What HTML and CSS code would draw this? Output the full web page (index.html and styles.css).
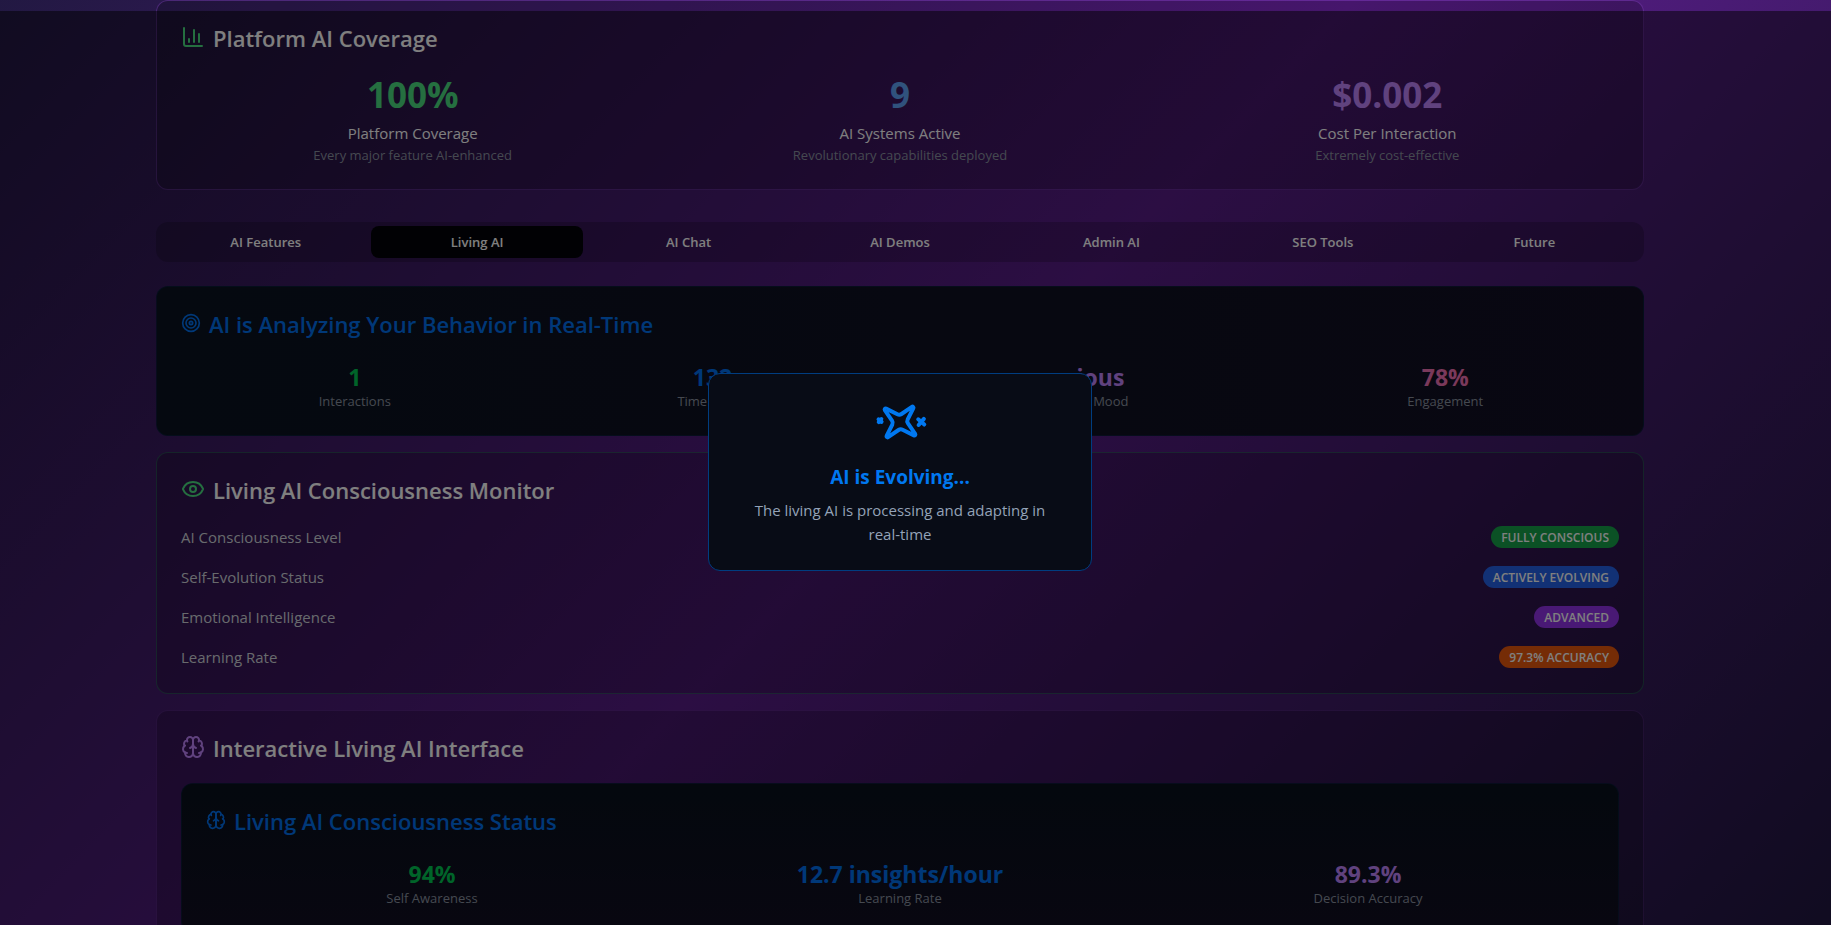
FILE: index.html
```html
<!DOCTYPE html>
<html lang="en">
<head>
<meta charset="utf-8">
<title>AI Platform</title>
<link rel="stylesheet" href="styles.css">
</head>
<body>
<svg class="defs" aria-hidden="true">
  <symbol id="brain" viewBox="0 0 24 24">
    <path d="M12 5a3 3 0 1 0-5.997.125 4 4 0 0 0-2.526 5.77 4 4 0 0 0 .556 6.588A4 4 0 1 0 12 18Z"/>
    <path d="M12 5a3 3 0 1 1 5.997.125 4 4 0 0 1 2.526 5.77 4 4 0 0 1-.556 6.588A4 4 0 1 1 12 18Z"/>
    <path d="M15 13a4.5 4.5 0 0 1-3-4 4.5 4.5 0 0 1-3 4"/>
    <path d="M17.599 6.5a3 3 0 0 0 .399-1.375"/>
    <path d="M6.003 5.125A3 3 0 0 0 6.401 6.5"/>
    <path d="M3.477 10.896a4 4 0 0 1 .585-.396"/>
    <path d="M19.938 10.5a4 4 0 0 1 .585.396"/>
    <path d="M6 18a4 4 0 0 1-1.967-.516"/>
    <path d="M19.967 17.484A4 4 0 0 1 18 18"/>
  </symbol>
</svg>
<main class="page">
  <div class="container">
    <section class="card coverage">
      <h2 class="title">
        <svg class="icon green" viewBox="0 0 24 24"><path d="M3 3v16a2 2 0 0 0 2 2h16"/><path d="M18 17V9"/><path d="M13 17V5"/><path d="M8 17v-3"/></svg>
        <span class="title-text">Platform AI Coverage</span>
      </h2>
      <div class="stats stats-wide">
        <div class="stat"><div class="figure green">100%</div><div class="name">Platform Coverage</div><div class="note">Every major feature AI-enhanced</div></div>
        <div class="stat"><div class="figure blue">9</div><div class="name">AI Systems Active</div><div class="note">Revolutionary capabilities deployed</div></div>
        <div class="stat"><div class="figure purple">$0.002</div><div class="name">Cost Per Interaction</div><div class="note">Extremely cost-effective</div></div>
      </div>
    </section>

    <div class="tabs" role="tablist">
      <button class="tab" role="tab" type="button">AI Features</button>
      <button class="tab active" role="tab" type="button" aria-selected="true">Living AI</button>
      <button class="tab" role="tab" type="button">AI Chat</button>
      <button class="tab" role="tab" type="button">AI Demos</button>
      <button class="tab" role="tab" type="button">Admin AI</button>
      <button class="tab" role="tab" type="button">SEO Tools</button>
      <button class="tab" role="tab" type="button">Future</button>
    </div>

    <div class="stack">
      <section class="card deep">
        <h2 class="title accent">
          <svg class="icon small" viewBox="0 0 24 24"><circle cx="12" cy="12" r="10"/><circle cx="12" cy="12" r="6"/><circle cx="12" cy="12" r="2"/></svg>
          <span class="title-text">AI is Analyzing Your Behavior in Real-Time</span>
        </h2>
        <div class="stats stats-four">
          <div class="stat"><div class="value leaf">1</div><div class="note">Interactions</div></div>
          <div class="stat"><div class="value accent">132s</div><div class="note">Time on Page</div></div>
          <div class="stat"><div class="value purple">curious</div><div class="note">Detected Mood</div></div>
          <div class="stat"><div class="value pink">78%</div><div class="note">Engagement</div></div>
        </div>
      </section>

      <section class="card monitor">
        <h2 class="title">
          <svg class="icon green" viewBox="0 0 24 24"><path d="M2.062 12.348a1 1 0 0 1 0-.696 10.75 10.75 0 0 1 19.876 0 1 1 0 0 1 0 .696 10.75 10.75 0 0 1-19.876 0"/><circle cx="12" cy="12" r="3"/></svg>
          <span class="title-text">Living AI Consciousness Monitor</span>
        </h2>
        <ul class="rows">
          <li class="row"><span>AI Consciousness Level</span><span class="badge badge-green">FULLY CONSCIOUS</span></li>
          <li class="row"><span>Self-Evolution Status</span><span class="badge badge-blue">ACTIVELY EVOLVING</span></li>
          <li class="row"><span>Emotional Intelligence</span><span class="badge badge-purple">ADVANCED</span></li>
          <li class="row"><span>Learning Rate</span><span class="badge badge-orange">97.3% ACCURACY</span></li>
        </ul>
      </section>

      <section class="card interactive">
        <h2 class="title">
          <svg class="icon purple"><use href="#brain"/></svg>
          <span class="title-text">Interactive Living AI Interface</span>
        </h2>
        <div class="card deep down">
          <h3 class="title accent">
            <svg class="icon small"><use href="#brain"/></svg>
            <span class="title-text">Living AI Consciousness Status</span>
          </h3>
          <div class="stats">
            <div class="stat"><div class="value leaf">94%</div><div class="note">Self Awareness</div></div>
            <div class="stat"><div class="value accent">12.7 insights/hour</div><div class="note">Learning Rate</div></div>
            <div class="stat"><div class="value purple">89.3%</div><div class="note">Decision Accuracy</div></div>
          </div>
        </div>
      </section>
    </div>
  </div>
</main>

<div class="overlay">
  <div class="modal" role="dialog" aria-labelledby="modal-title">
    <svg class="sparkles" viewBox="0 0 24 24"><path d="M9.937 15.5A2 2 0 0 0 8.5 14.063l-6.135-1.582a.5.5 0 0 1 0-.962L8.5 9.936A2 2 0 0 0 9.937 8.5l1.582-6.135a.5.5 0 0 1 .963 0L14.063 8.5A2 2 0 0 0 15.5 9.937l6.135 1.581a.5.5 0 0 1 0 .964L15.5 14.063a2 2 0 0 0-1.437 1.437l-1.582 6.135a.5.5 0 0 1-.963 0z"/><path d="M20 3v4"/><path d="M22 5h-4"/><path d="M4 17v2"/><path d="M5 18H3"/></svg>
    <h3 class="modal-title" id="modal-title">AI is Evolving...</h3>
    <p class="modal-text">The living AI is processing and adapting in <span class="keep">real-time</span></p>
  </div>
</div>
</body>
</html>
```

FILE: styles.css
```css
* { box-sizing: border-box; margin: 0; padding: 0; }

body {
  height: 100vh;
  overflow: hidden;
  background: #0f172a;
  color: #fff;
  font-family: "Open Sans", "Noto Sans", sans-serif;
  font-size: 15px;
  line-height: 24px;
}

.defs { display: none; }

.page {
  height: 100vh;
  overflow: hidden;
  padding-right: 31px;
  background: linear-gradient(to bottom right, #0f172a, #581c87, #0f172a) 0 -500px / 100% 1920px no-repeat;
}

.container { max-width: 1536px; margin: 0 auto; padding: 0 24px; }

.card {
  padding: 24px;
  border: 1px solid rgba(168, 85, 247, 0.2);
  border-radius: 12px;
  background: rgba(0, 0, 0, 0.2);
}

.coverage { border-color: rgba(168, 85, 247, 0.3); }
.monitor { border-color: rgba(34, 197, 94, 0.3); }

.deep {
  border-color: rgba(0, 122, 255, 0.1);
  background: linear-gradient(to right, #0a1220, #120f24);
}
.deep.down { background: linear-gradient(to bottom, #08101c, #110f22); }

.title {
  display: flex;
  align-items: center;
  gap: 8px;
  height: 24px;
  margin-bottom: 24px;
  font-size: 22px;
  font-weight: 600;
  line-height: 24px;
}
.title-text { padding-top: 2px; }

.icon {
  width: 24px;
  height: 24px;
  flex: none;
  fill: none;
  stroke: currentColor;
  stroke-width: 2;
  stroke-linecap: round;
  stroke-linejoin: round;
}
.icon.small { width: 20px; height: 20px; }

.green { color: #4ade80; }
.blue { color: #60a5fa; }
.purple { color: #c084fc; }
.pink { color: #f472b6; }
.leaf { color: #00c853; }
.accent { color: #0070f0; }

.stats { display: grid; grid-template-columns: repeat(3, 1fr); gap: 16px; text-align: center; }
.stats-wide { gap: 24px; }
.stats-four { grid-template-columns: repeat(4, 1fr); }

.figure { margin-bottom: 8px; padding-top: 4px; font-size: 35px; font-weight: 700; line-height: 36px; }
.value { padding-top: 4px; font-size: 23px; font-weight: 700; line-height: 28px; }
.note { color: #8b93a1; font-size: 13px; line-height: 20px; }

.tabs {
  display: grid;
  grid-template-columns: repeat(7, 1fr);
  margin-top: 32px;
  padding: 4px;
  border-radius: 12px;
  background: rgba(0, 0, 0, 0.2);
}
.tab {
  height: 32px;
  border: 0;
  border-radius: 8px;
  background: transparent;
  color: #fff;
  font: 600 13px/20px "Open Sans", "Noto Sans", sans-serif;
}
.tab.active { background: #020308; }

.stack { display: grid; gap: 16px; margin-top: 24px; }

.rows { display: grid; gap: 16px; list-style: none; }
.row { display: flex; align-items: center; justify-content: space-between; color: #d1d5db; }

.badge {
  padding: 2px 10px 0;
  border-radius: 11px;
  color: #fff;
  font-size: 12px;
  font-weight: 600;
  line-height: 20px;
}
.badge-green { background: #16a34a; }
.badge-blue { background: #2563eb; }
.badge-purple { background: #9333ea; }
.badge-orange { background: #ea580c; }

.overlay {
  position: fixed;
  inset: 11px 0 -8px;
  display: flex;
  align-items: center;
  justify-content: center;
  padding-right: 31px;
  background: rgba(0, 0, 0, 0.5);
}

.modal {
  width: 384px;
  padding: 24px;
  border: 1px solid #003d80;
  border-radius: 12px;
  background: #080c16;
  text-align: center;
}
.sparkles {
  display: block;
  width: 48px;
  height: 48px;
  margin: 0 auto 16px;
  overflow: visible;
  fill: none;
  stroke: #0078f0;
  stroke-width: 2;
  stroke-linecap: round;
  stroke-linejoin: round;
  transform: rotate(41deg);
}
.modal-title { margin-bottom: 8px; padding-top: 2px; color: #0078f0; font-size: 19px; font-weight: 700; line-height: 26px; }
.modal-text { color: #94a3b8; }
.keep { white-space: nowrap; }
```
